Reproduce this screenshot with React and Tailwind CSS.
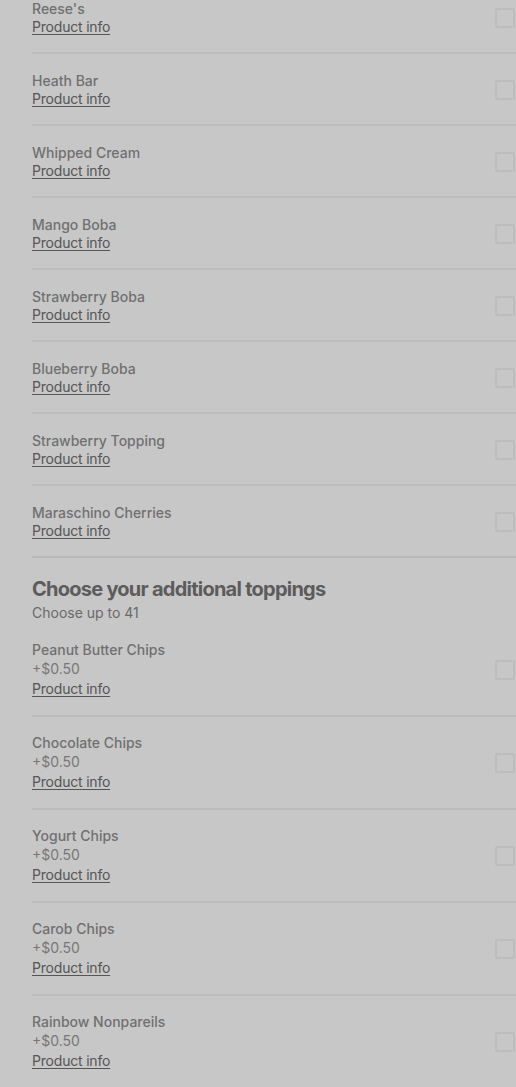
import React from "react";

const first = [
  "Reese's",
  "Heath Bar",
  "Whipped Cream",
  "Mango Boba",
  "Strawberry Boba",
  "Blueberry Boba",
  "Strawberry Topping",
  "Maraschino Cherries",
];

const second = [
  "Peanut Butter Chips",
  "Chocolate Chips",
  "Yogurt Chips",
  "Carob Chips",
  "Rainbow Nonpareils",
];

function Box() {
  return (
    <div className="w-[20px] h-[20px] shrink-0 rounded-[2px] border-2 border-[#bdbdbd]" />
  );
}

function Link({ lh }) {
  return (
    <div
      className={`text-[14px] ${lh} tracking-[-0.2px] text-[#555555] underline underline-offset-2 decoration-[#555555] w-fit`}
    >
      Product info
    </div>
  );
}

export default function App() {
  return (
    <div
      className="w-full h-[1087px] overflow-hidden bg-[#c7c7c7] pl-8"
      style={{ fontFamily: "Inter, 'Noto Sans', sans-serif" }}
    >
      {first.map((n, i) => (
        <div
          key={n}
          className={`flex items-center justify-between pr-px pb-4 border-b-2 ${i === first.length - 1 ? "border-[#b8b8b8]" : "border-[#bcbcbc]"} ${i === 0 ? "pt-0" : "pt-[18px]"}`}
        >
          <div>
            <div className="text-[14px] leading-[18px] font-medium text-[#707070]">{n}</div>
            <Link lh="leading-[18px]" />
          </div>
          <Box />
        </div>
      ))}
      <div className="pt-4 pb-[2px]">
        <div className="text-[20px] leading-[30px] font-bold tracking-[-0.75px] text-[#5c5c5c]">
          Choose your additional toppings
        </div>
        <div className="text-[14px] leading-[18px] text-[#6a6a6a]">Choose up to 41</div>
      </div>
      {second.map((n) => (
        <div
          key={n}
          className="flex items-center justify-between pr-px pt-[17px] pb-4 border-b-2 border-[#bcbcbc]"
        >
          <div>
            <div className="text-[14px] leading-[18px] font-medium text-[#707070]">{n}</div>
            <div className="text-[14px] leading-[20px] text-[#777777]">+$0.50</div>
            <Link lh="leading-[20px]" />
          </div>
          <Box />
        </div>
      ))}
    </div>
  );
}
